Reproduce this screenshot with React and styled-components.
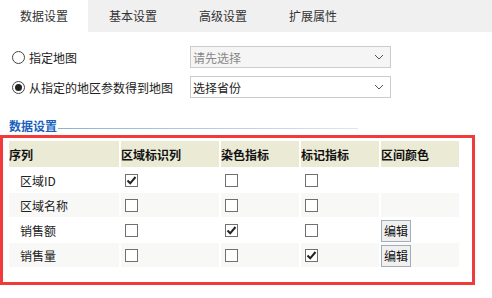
import React from "react";
import styled, { createGlobalStyle } from "styled-components";

const GlobalStyle = createGlobalStyle`
  body {
    margin: 0;
    background: #fff;
    font-family: "Microsoft YaHei", "Noto Sans CJK SC", sans-serif;
    font-size: 12px;
    color: #222;
  }
`;

const TABS = ["数据设置", "基本设置", "高级设置", "扩展属性"];

const COLUMNS = [
  { title: "序列", width: 110 },
  { title: "区域标识列", width: 98 },
  { title: "染色指标", width: 78 },
  { title: "标记指标", width: 78 },
  { title: "区间颜色", width: 78 },
];

const ROWS = [
  { name: "区域ID", marks: [true, false, false], edit: false },
  { name: "区域名称", marks: [false, false, false], edit: false },
  { name: "销售额", marks: [false, true, false], edit: true },
  { name: "销售量", marks: [false, false, true], edit: true },
];

const Chevron = () => (
  <svg width="10" height="6" viewBox="0 0 10 6">
    <polyline points="1,1 5,5 9,1" fill="none" stroke="#555" strokeWidth="1" />
  </svg>
);

const Check = () => (
  <svg width="11" height="11" viewBox="0 0 11 11">
    <polyline points="1.5,5.5 4.2,8.3 9.5,2" fill="none" stroke="#222" strokeWidth="2" />
  </svg>
);

const App = () => {
  return (
    <Page>
      <GlobalStyle />
      <TabBar>
        {TABS.map((t, i) => (
          <Tab key={t} $active={i === 0}>{t}</Tab>
        ))}
      </TabBar>

      <Form>
        <FormRow>
          <RadioLabel>
            <Radio />
            指定地图
          </RadioLabel>
          <Select $disabled>
            <span>请先选择</span>
            <Chevron />
          </Select>
        </FormRow>
        <FormRow>
          <RadioLabel>
            <Radio $checked />
            从指定的地区参数得到地图
          </RadioLabel>
          <Select>
            <span>选择省份</span>
            <Chevron />
          </Select>
        </FormRow>
      </Form>

      <SectionTitle>
        <span>数据设置</span>
        <TitleLine />
      </SectionTitle>

      <RedBox>
        <Table>
          <colgroup>
            {COLUMNS.map((c) => (
              <Col key={c.title} $w={c.width} />
            ))}
          </colgroup>
          <thead>
            <tr>
              {COLUMNS.map((c) => (
                <Th key={c.title}>{c.title}</Th>
              ))}
            </tr>
          </thead>
          <tbody>
            {ROWS.map((r, i) => (
              <Tr key={r.name} $alt={i % 2 === 1}>
                <NameCell>{r.name}</NameCell>
                {r.marks.map((m, j) => (
                  <Td key={j}>
                    <Box>{m && <Check />}</Box>
                  </Td>
                ))}
                <Td $flush>{r.edit && <EditButton>编辑</EditButton>}</Td>
              </Tr>
            ))}
          </tbody>
        </Table>
      </RedBox>
    </Page>
  );
};

const Page = styled.div`
  width: 492px;
  height: 298px;
  overflow: hidden;
`;

const TabBar = styled.div`
  display: flex;
  height: 32px;
  background: #f0f0f0;
`;

const Tab = styled.div`
  width: 90px;
  line-height: 32px;
  text-align: center;
  color: #333;
  background: ${(p) => (p.$active ? "#fff" : "transparent")};
  &:first-child {
    width: 88px;
  }
`;

const Form = styled.div`
  display: flex;
  flex-direction: column;
  gap: 8px;
  padding: 14px 0 0 12px;
`;

const FormRow = styled.div`
  display: flex;
  align-items: center;
  height: 22px;
`;

const RadioLabel = styled.label`
  display: flex;
  align-items: center;
  gap: 4px;
  width: 178px;
  color: #222;
`;

const Radio = styled.span`
  position: relative;
  width: 13px;
  height: 13px;
  box-sizing: border-box;
  border: 1px solid #444;
  border-radius: 50%;
  background: #fff;
  &::after {
    content: "";
    display: ${(p) => (p.$checked ? "block" : "none")};
    position: absolute;
    left: 2px;
    top: 2px;
    width: 7px;
    height: 7px;
    border-radius: 50%;
    background: #222;
  }
`;

const Select = styled.div`
  display: flex;
  align-items: center;
  justify-content: space-between;
  box-sizing: border-box;
  width: 201px;
  height: 22px;
  padding: 0 6px 0 2px;
  border: 1px solid #ccc;
  background: ${(p) => (p.$disabled ? "#f5f5f5" : "#fff")};
  color: ${(p) => (p.$disabled ? "#888" : "#222")};
`;

const SectionTitle = styled.div`
  display: flex;
  align-items: center;
  gap: 1px;
  height: 17px;
  margin-top: 19px;
  padding-left: 9px;
  color: #1a60c0;
  font-weight: bold;
`;

const TitleLine = styled.div`
  width: 300px;
  height: 1px;
  margin-top: 5px;
  background: linear-gradient(to right, #8fb0d2, #dce6ef);
`;

const RedBox = styled.div`
  box-sizing: border-box;
  width: 475px;
  height: 150px;
  margin-top: 1px;
  border: 3px solid #f23a3a;
  padding: 2px 0 0 4px;
`;

const Table = styled.table`
  border-spacing: 2px 1px;
  table-layout: fixed;
  width: 454px;
`;

const Col = styled.col`
  width: ${(p) => p.$w}px;
`;

const Th = styled.th`
  box-sizing: border-box;
  height: 26px;
  padding: 0;
  text-align: left;
  font-weight: bold;
  color: #111;
  background: #ebebd5;
`;

const Tr = styled.tr`
  background: ${(p) => (p.$alt ? "#f8f8f6" : "#fff")};
`;

const Td = styled.td`
  box-sizing: border-box;
  height: 24px;
  padding: 0 0 0 ${(p) => (p.$flush ? 0 : 4)}px;
  vertical-align: middle;
`;

const NameCell = styled.td`
  box-sizing: border-box;
  height: 24px;
  padding: 0 0 0 11px;
  color: #222;
`;

const Box = styled.div`
  display: flex;
  align-items: center;
  justify-content: center;
  box-sizing: border-box;
  width: 13px;
  height: 13px;
  border: 1px solid #707070;
  background: #fff;
`;

const EditButton = styled.button`
  display: block;
  box-sizing: border-box;
  width: 30px;
  height: 22px;
  margin-top: 1px;
  padding: 0;
  border: 1px solid #a3adb8;
  background: #f0f0f0;
  font-family: inherit;
  font-size: 12px;
  color: #111;
`;

export default App;
